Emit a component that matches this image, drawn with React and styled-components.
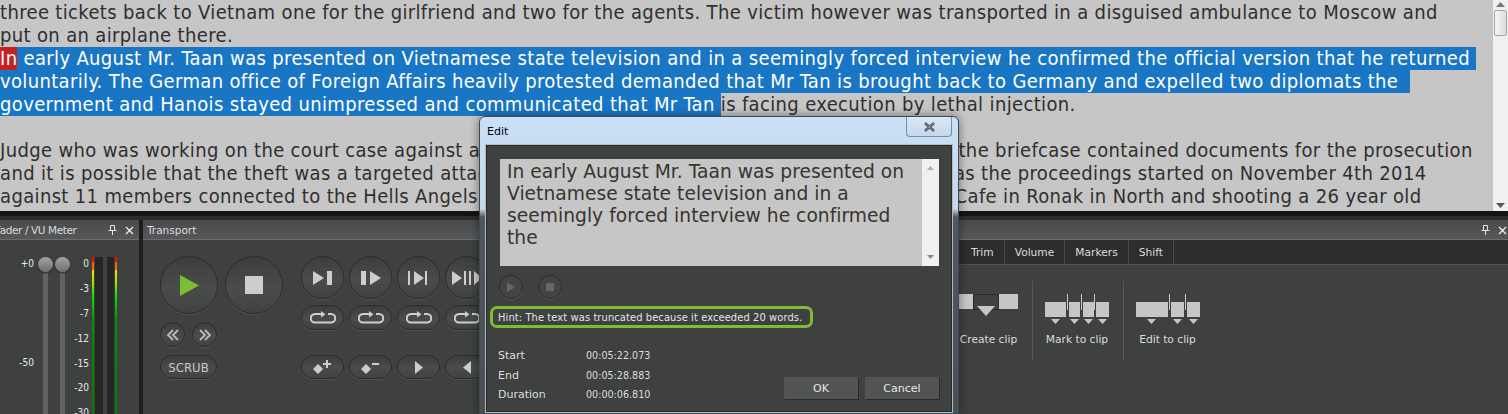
import React from 'react';
import styled, { createGlobalStyle } from 'styled-components';

const Global = createGlobalStyle`
  html, body { margin: 0; padding: 0; background: #1d1d1d; overflow: hidden; }
  body { width: 1508px; height: 414px; font-family: "DejaVu Sans", sans-serif; }
`;

function Doc() {
  return (
    <DocArea>
      <DocText>
        <Line>three tickets back to Vietnam one for the girlfriend and two for the agents. The victim however was transported in a disguised ambulance to Moscow and</Line>
        <Line>put on an airplane there.</Line>
        <Line><Sel><Word>In</Word> early August Mr. Taan was presented on Vietnamese state television and in a seemingly forced interview he confirmed the official version that he returned </Sel></Line>
        <Line><Sel>voluntarily. The German office of Foreign Affairs heavily protested demanded that Mr Tan is brought back to Germany and expelled two diplomats the  </Sel></Line>
        <Line><Sel>government and Hanois stayed unimpressed and communicated that Mr Tan </Sel>is facing execution by lethal injection.</Line>
        <Line>&nbsp;</Line>
        <Line>Judge who was working on the court case against a senior member of the Hells Angels lost his bag. In the briefcase contained documents for the prosecution</Line>
        <Line>and it is possible that the theft was a targeted attack on the case and was meant to stop the process as the proceedings started on November 4th 2014</Line>
        <Line>against 11 members connected to the Hells Angels accused of storming with heavy weapons into the Cafe in Ronak in North and shooting a 26 year old</Line>
      </DocText>
      <Scroll>
        <Arrow viewBox="0 0 9 5"><path d="M4.5 0 9 5H0z" fill="#777" /></Arrow>
        <Thumb />
        <Spacer />
        <Arrow viewBox="0 0 9 5"><path d="M0 0h9L4.5 5z" fill="#555" /></Arrow>
      </Scroll>
    </DocArea>
  );
}

function Fader() {
  const ticks = ['0', '-3', '-7', '-12', '-15', '-20', '-30'];
  return (
    <FaderBody>
      <GainLabels><span>+0</span><span>-50</span></GainLabels>
      <Slider><Knob /></Slider>
      <Slider><Knob /></Slider>
      <Ticks>{ticks.map((t) => <span key={t}>{t}</span>)}</Ticks>
      <Meter><Bar /><Well /></Meter>
      <Meter><Well /><Bar /></Meter>
    </FaderBody>
  );
}

const LoopIcon = () => (
  <svg width="26" height="13" viewBox="0 0 26 13" fill="none" stroke="#cfcfcf" strokeWidth="2">
    <path d="M13 3H5a4 4 0 0 0 0 8.5h16a4 4 0 0 0 0-8.5h-3" />
    <path d="M11 0v6.500l4.500-3.200z" fill="#cfcfcf" stroke="none" />
  </svg>
);

const PanelIcons = () => (
  <HeaderIcons>
    <svg width="9" height="10" viewBox="0 0 9 10" fill="none" stroke="#e6e6e6"><path d="M2.500.5h4v5h-4zM.5 5.500h8M4.500 6v4" /></svg>
    <svg width="9" height="9" viewBox="0 0 9 9" stroke="#f0f0f0" strokeWidth="1.300"><path d="M1 1l7 7M8 1 1 8" /></svg>
  </HeaderIcons>
);

function Transport() {
  return (
    <TransportBody>
      <MainGroup>
        <BigRow>
          <Round $size={58}><svg width="19" height="21" viewBox="0 0 19 21"><path d="M0 0l19 10.500L0 21z" fill="#7cbe31" /></svg></Round>
          <Round $size={58}><svg width="18" height="18"><rect width="18" height="18" fill="#cdcdcd" /></svg></Round>
        </BigRow>
        <SmallRow>
          <Round $size={25}><svg width="12" height="12" viewBox="0 0 12 12" fill="none" stroke="#bbb" strokeWidth="1.800"><path d="M6 1 1 6l5 5M11 1 6 6l5 5" /></svg></Round>
          <Round $size={25}><svg width="12" height="12" viewBox="0 0 12 12" fill="none" stroke="#bbb" strokeWidth="1.800"><path d="m1 1 5 5-5 5M6 1l5 5-5 5" /></svg></Round>
        </SmallRow>
        <Pill $w={57}>SCRUB</Pill>
      </MainGroup>
      <ClipGrid>
        <Round $size={43}><svg width="20" height="14" viewBox="0 0 20 14" fill="#cdcdcd"><path d="M0 0l11 7-11 7z" /><rect x="14" width="5" height="14" /></svg></Round>
        <Round $size={43}><svg width="20" height="14" viewBox="0 0 20 14" fill="#cdcdcd"><rect width="5" height="14" /><path d="M9 0l11 7-11 7z" /></svg></Round>
        <Round $size={43}><svg width="22" height="14" viewBox="0 0 22 14" fill="#cdcdcd"><rect width="2" height="14" /><path d="M6 0l10 7-10 7z" /><rect x="17" width="2" height="14" /></svg></Round>
        <Round $size={43}><svg width="30" height="14" viewBox="0 0 30 14" fill="#cdcdcd"><path d="M0 0l10 7-10 7z" /><rect x="12" width="2" height="14" /><rect x="17" width="2" height="14" /><path d="M22 0l8 7-8 7z" /></svg></Round>
        <Pill $w={43} $h={25}><LoopIcon /></Pill>
        <Pill $w={43} $h={25}><LoopIcon /></Pill>
        <Pill $w={43} $h={25}><LoopIcon /></Pill>
        <Pill $w={43} $h={25}><LoopIcon /></Pill>
        <RowGap />
        <Pill $w={43}><svg width="19" height="14" viewBox="0 0 19 14" fill="#cdcdcd"><path d="M5 4l5 5-5 5-5-5z" /><path d="M13 0h2v3h3v2h-3v3h-2V5h-3V3h3z" /></svg></Pill>
        <Pill $w={43}><svg width="19" height="14" viewBox="0 0 19 14" fill="#cdcdcd"><path d="M5 4l5 5-5 5-5-5z" /><rect x="11" y="3" width="7" height="2" /></svg></Pill>
        <Pill $w={43}><svg width="8" height="13" viewBox="0 0 8 13" fill="#cdcdcd"><path d="M0 0l8 6.500L0 13z" /></svg></Pill>
        <Pill $w={43}><svg width="8" height="13" viewBox="0 0 8 13" fill="#cdcdcd"><path d="M8 0L0 6.500 8 13z" /></svg></Pill>
      </ClipGrid>
    </TransportBody>
  );
}

const CreateClipIcon = () => (
  <svg width="59" height="24" viewBox="0 0 59 24">
    <rect width="59" height="15" fill="#c6c6c6" />
    <rect x="14.500" y=".5" width="25" height="15" fill="#3f4040" stroke="#2b2b2b" />
    <path d="M18 12h18l-9 10z" fill="#c6c6c6" />
  </svg>
);

const MarkIcon = () => (
  <svg width="64" height="31" viewBox="0 0 64 31" fill="#c6c6c6">
    <rect y="8" width="21" height="15" />
    <rect x="24" y="8" width="11" height="15" />
    <rect x="38" y="8" width="11" height="15" />
    <rect x="51" y="8" width="13" height="15" />
    <rect x="22" width="1" height="16" />
    <rect x="36" width="1" height="16" />
    <rect x="49" width="1" height="16" />
    <path d="M6 25h9l-4.500 5zM25 25h9l-4.500 5zM39 25h9l-4.500 5zM53 25h9l-4.500 5z" />
  </svg>
);

const EditIcon = () => (
  <svg width="64" height="31" viewBox="0 0 64 31" fill="#c6c6c6">
    <rect y="8" width="32" height="15" />
    <rect x="35" y="8" width="13" height="15" />
    <rect x="51" y="8" width="13" height="15" />
    <rect x="33" width="1" height="16" />
    <rect x="49" width="1" height="16" />
    <path d="M11 25h9l-4.500 5zM37 25h9l-4.500 5zM53 25h9l-4.500 5z" />
  </svg>
);

function ClipPanel() {
  const tabs = ['Trim', 'Volume', 'Markers', 'Shift'];
  return (
    <>
      <Tabs>{tabs.map((t) => <Tab key={t}>{t}</Tab>)}</Tabs>
      <Tools>
        <Tool $w={88}><IconSlot><CreateClipIcon /></IconSlot>Create clip</Tool>
        <Tool $w={91} $pr={2}><IconSlot><MarkIcon /></IconSlot>Mark to clip</Tool>
        <Tool $w={91} $pr={4} $last><IconSlot><EditIcon /></IconSlot>Edit to clip</Tool>
      </Tools>
    </>
  );
}

function Dialog() {
  return (
    <Win>
      <TitleBar>
        <span>Edit</span>
        <CloseBtn><svg width="11" height="10" viewBox="0 0 11 10"><path d="M1 1l9 8M10 1l-9 8" stroke="#444" strokeWidth="2.400" /><path d="M1.500 1l8 8M9.500 1l-8 8" stroke="#eee" strokeWidth=".6" /></svg></CloseBtn>
      </TitleBar>
      <WinBody>
        <TextBox>
          <TextBoxText>In early August Mr. Taan was presented on Vietnamese state television and in a seemingly forced interview he confirmed the</TextBoxText>
          <BoxScroll>
            <svg width="7" height="4" viewBox="0 0 7 4"><path d="M3.500 0 7 4H0z" fill="#aaa" /></svg>
            <svg width="7" height="4" viewBox="0 0 7 4"><path d="M0 0h7L3.500 4z" fill="#888" /></svg>
          </BoxScroll>
        </TextBox>
        <DimRow>
          <Round $size={24} $dim><svg width="8" height="10" viewBox="0 0 8 10"><path d="M0 0l8 5-8 5z" fill="#666" /></svg></Round>
          <Round $size={24} $dim><svg width="8" height="8"><rect width="8" height="8" fill="#666" /></svg></Round>
        </DimRow>
        <Hint>Hint: The text was truncated because it exceeded 20 words.</Hint>
        <Footer>
          <Info>
            <span>Start</span><Stamp>00:05:22.073</Stamp>
            <span>End</span><Stamp>00:05:28.883</Stamp>
            <span>Duration</span><Stamp>00:00:06.810</Stamp>
          </Info>
          <Buttons>
            <FlatBtn>OK</FlatBtn>
            <FlatBtn>Cancel</FlatBtn>
          </Buttons>
        </Footer>
      </WinBody>
    </Win>
  );
}

export default function App() {
  return (
    <Page>
      <Global />
      <Doc />
      <Dock>
        <Panel $w={139}>
          <Header $pr={5}>
            <HeaderTitle $clip>Fader / VU Meter</HeaderTitle>
            <PanelIcons />
          </Header>
          <Fader />
        </Panel>
        <Panel $w={420}>
          <Header><HeaderTitle>Transport</HeaderTitle></Header>
          <Transport />
        </Panel>
        <Panel $grow>
          <Header $pr={1}><span /><PanelIcons /></Header>
          <ClipPanel />
        </Panel>
      </Dock>
      <Dialog />
    </Page>
  );
}

const Page = styled.div`
  position: relative;
  width: 1508px;
  height: 414px;
  overflow: hidden;
  display: flex;
  flex-direction: column;
`;

const DocArea = styled.div`
  height: 211px;
  flex: none;
  display: flex;
  background: #c6c6c6;
  overflow: hidden;
`;
const DocText = styled.div`
  flex: 1;
  min-width: 0;
  padding-top: 1px;
  font-size: 20px;
  line-height: 23px;
  color: #2f2f2f;
  font-stretch: condensed;
  font-family: "DejaVu Sans Condensed", "DejaVu Sans", sans-serif;
  letter-spacing: 0.35px;
`;
const Line = styled.div`
  white-space: pre;
  height: 23px;
`;
const Sel = styled.span`
  display: inline-block;
  height: 23px;
  background: #1976c5;
  color: #fff;
`;
const Word = styled.span`
  display: inline-block;
  background: #c7211f;
  color: #fff;
`;
const Scroll = styled.div`
  width: 15px;
  flex: none;
  background: #f0f0f0;
  display: flex;
  flex-direction: column;
  align-items: center;
  padding: 2px 0 3px;
  box-sizing: border-box;
`;
const Thumb = styled.div`
  width: 13px;
  height: 26px;
  margin-top: 3px;
  background: linear-gradient(90deg, #f6f6f6, #dcdcdc);
  border: 1px solid #a6a6a6;
  border-radius: 2px;
  box-sizing: border-box;
`;
const Spacer = styled.div`
  flex: 1;
`;
const Arrow = styled.svg`
  width: 9px;
  height: 5px;
  flex: none;
`;

const Dock = styled.div`
  flex: 1;
  display: flex;
  gap: 4px;
  padding-top: 9px;
  background: linear-gradient(#141414 0 5px, #2c2c2c 5px 9px, #1d1d1d 9px);
  min-height: 0;
`;
const Panel = styled.div`
  ${(p) => (p.$w ? `width: ${p.$w}px; flex: none;` : 'flex: 1; min-width: 0;')}
  display: flex;
  flex-direction: column;
  background: #3f4040;
  min-height: 0;
  overflow: hidden;
`;
const Header = styled.div`
  height: 20px;
  flex: none;
  display: flex;
  align-items: center;
  justify-content: space-between;
  background: linear-gradient(#4a4b4c, #565758);
  border-bottom: 1px solid #6c6c6c;
  padding: 1px ${(p) => p.$pr ?? 6}px 0 4px;
  box-sizing: border-box;
  overflow: hidden;
`;
const HeaderTitle = styled.span`
  font-size: 10.5px;
  color: #dcdcdc;
  white-space: nowrap;
  ${(p) => p.$clip && 'margin-left: -9px; letter-spacing: -0.4px;'}
`;
const HeaderIcons = styled.div`
  display: flex;
  align-items: center;
  gap: 8px;
`;

const FaderBody = styled.div`
  display: grid;
  grid-template-columns: 34px 17px 17px 20px 14px 11px;
  padding-left: 4px;
  padding-top: 17px;
`;
const GainLabels = styled.div`
  display: flex;
  flex-direction: column;
  align-items: flex-end;
  gap: 85px;
  padding-right: 4px;
  font-size: 10px;
  line-height: 14px;
  color: #e8e8e8;
  font-family: "DejaVu Sans Condensed", "DejaVu Sans", sans-serif;
  font-stretch: condensed;
`;
const Slider = styled.div`
  position: relative;
  width: 5px;
  height: 170px;
  margin-left: 5px;
  background: #626262;
`;
const Knob = styled.div`
  position: absolute;
  top: 0;
  left: -5px;
  width: 15px;
  height: 15px;
  border-radius: 50%;
  background: linear-gradient(#a2a2a2, #6e6e6e);
  box-shadow: 0 1px 2px #222;
`;
const Ticks = styled.div`
  display: flex;
  flex-direction: column;
  align-items: flex-end;
  gap: 10.9px;
  padding-right: 3px;
  font-size: 10px;
  line-height: 14px;
  color: #e8e8e8;
  font-family: "DejaVu Sans Condensed", "DejaVu Sans", sans-serif;
  font-stretch: condensed;
`;
const Meter = styled.div`
  display: flex;
  height: 170px;
`;
const Bar = styled.div`
  width: 2px;
  background: linear-gradient(#ff0000 0 5px, #f06a00 5px 13px, #e8e800 13px, #a5e000 25px, #00e000 40px, #009000 64px, #007c00);
`;
const Well = styled.div`
  width: 8px;
  background: #252525;
  margin: 0 1px;
`;

const TransportBody = styled.div`
  display: flex;
  gap: 18px;
  padding: 16px 0 0 17px;
`;
const MainGroup = styled.div`
  width: 123px;
  flex: none;
  display: flex;
  flex-direction: column;
`;
const BigRow = styled.div`
  display: flex;
  gap: 7px;
`;
const SmallRow = styled.div`
  display: flex;
  gap: 7px;
  margin: 8px 0;
`;
const Round = styled.div`
  width: ${(p) => p.$size}px;
  height: ${(p) => p.$size}px;
  flex: none;
  border-radius: 50%;
  display: flex;
  align-items: center;
  justify-content: center;
  box-sizing: border-box;
  border: 1px solid #2c2c2c;
  background: ${(p) => (p.$dim ? '#434444' : 'linear-gradient(#3c3d3d, #4a4b4b 55%, #404141)')};
  box-shadow: 0 1px 0 #505050;
`;
const Pill = styled.div`
  width: ${(p) => p.$w}px;
  height: ${(p) => p.$h || 24}px;
  border-radius: 13px;
  display: flex;
  align-items: center;
  justify-content: center;
  box-sizing: border-box;
  border: 1px solid #2c2c2c;
  background: linear-gradient(#3c3d3d, #4a4b4b 55%, #404141);
  box-shadow: 0 1px 0 #505050;
  color: #c8c8c8;
  font-size: 13px;
  font-family: "DejaVu Sans Condensed", "DejaVu Sans", sans-serif;
  font-stretch: condensed;
  overflow: hidden;
`;
const ClipGrid = styled.div`
  display: grid;
  grid-template-columns: repeat(4, 43px);
  column-gap: 5px;
  row-gap: 6px;
  align-items: start;
`;
const RowGap = styled.div`
  grid-column: 1 / -1;
  height: 13px;
`;

const Tabs = styled.div`
  display: flex;
  height: 25px;
  flex: none;
  padding-left: 394px;
  background: #2d2d2d;
  border-bottom: 1px solid #525252;
  box-sizing: border-box;
`;
const Tab = styled.div`
  display: flex;
  align-items: center;
  padding: 1px 10px 0;
  border-right: 1px solid #4a4a4a;
  font-size: 10.67px;
  color: #dcdcdc;
`;
const Tools = styled.div`
  display: flex;
  padding: 16px 0 0 378px;
`;
const Tool = styled.div`
  width: ${(p) => p.$w}px;
  height: 80px;
  flex: none;
  box-sizing: border-box;
  padding-right: ${(p) => p.$pr || 0}px;
  display: flex;
  flex-direction: column;
  align-items: center;
  font-size: 10.67px;
  color: #dcdcdc;
  border-right: ${(p) => (p.$last ? 'none' : '1px solid #585858')};
`;
const IconSlot = styled.div`
  height: 52px;
  padding-top: 13px;
  box-sizing: border-box;
  display: flex;
  align-items: flex-start;
`;

const Win = styled.div`
  position: absolute;
  left: 479px;
  top: 116px;
  width: 480px;
  height: 298px;
  box-sizing: border-box;
  padding: 0 6px 1px;
  border: 1px solid #3e4a55;
  border-radius: 6px 6px 0 0;
  background: linear-gradient(#c9e0f6 0, #c4d8ea 92px, #525759 100px, #4d5052 100%);
  box-shadow: 0 0 10px rgba(0, 0, 0, 0.45);
  display: flex;
  flex-direction: column;
`;
const TitleBar = styled.div`
  height: 28px;
  flex: none;
  display: flex;
  justify-content: space-between;
  font-size: 11px;
  color: #000;
  span { padding: 8px 0 0 1px; }
`;
const CloseBtn = styled.div`
  width: 46px;
  height: 20px;
  box-sizing: border-box;
  border: 1px solid #7d8c9c;
  border-top: none;
  border-radius: 0 0 4px 4px;
  background: linear-gradient(#d8e8f7, #c4d8ec);
  display: flex;
  align-items: center;
  justify-content: center;
`;
const WinBody = styled.div`
  flex: 1;
  background: #3f4040;
  border: 1px solid #2a2a2a;
  box-shadow: 0 0 0 1px #a9bccb;
  padding: 13px 12px 0 13px;
  display: flex;
  flex-direction: column;
  min-height: 0;
`;
const TextBox = styled.div`
  height: 107px;
  flex: none;
  display: flex;
  background: #c6c6c6;
`;
const TextBoxText = styled.div`
  flex: 1;
  padding: 2px 11px 0 7px;
  font-size: 18.67px;
  line-height: 22px;
  letter-spacing: 0.03px;
  color: #38342f;
  font-family: "DejaVu Sans", sans-serif;
`;
const BoxScroll = styled.div`
  width: 17px;
  background: #f0f0f0;
  display: flex;
  flex-direction: column;
  align-items: center;
  justify-content: space-between;
  padding: 7px 0;
  box-sizing: border-box;
`;
const DimRow = styled.div`
  display: flex;
  gap: 15px;
  margin: 9px 0 7px -1px;
`;
const Hint = styled.div`
  width: 323px;
  height: 22px;
  margin-left: -10px;
  box-sizing: border-box;
  border: 3px solid #7fbb35;
  border-radius: 7px;
  padding-left: 5px;
  display: flex;
  align-items: center;
  font-size: 11px;
  color: #e6e6e6;
  white-space: nowrap;
  font-family: "DejaVu Sans Condensed", "DejaVu Sans", sans-serif;
  font-stretch: condensed;
  letter-spacing: 0.1px;
`;
const Footer = styled.div`
  display: flex;
  justify-content: space-between;
  align-items: flex-start;
  margin-top: 21px;
`;
const Info = styled.div`
  display: grid;
  grid-template-columns: 88px auto;
  row-gap: 6px;
  margin-left: -2px;
  font-size: 11px;
  line-height: 13.500px;
  color: #dedede;
`;
const Stamp = styled.span`
  font-size: 10.67px;
  font-family: "DejaVu Sans Condensed", "DejaVu Sans", sans-serif;
  font-stretch: condensed;
`;
const Buttons = styled.div`
  display: flex;
  gap: 7px;
  margin-top: 28px;
`;
const FlatBtn = styled.div`
  width: 74px;
  height: 22px;
  display: flex;
  align-items: center;
  justify-content: center;
  background: #525353;
  box-shadow: 1px 1px 0 #2a2a2a;
  font-size: 11px;
  color: #e6e6e6;
`;
